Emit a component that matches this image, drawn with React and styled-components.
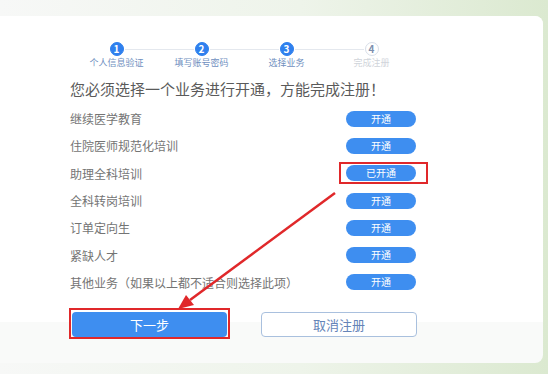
import styled, { createGlobalStyle } from "styled-components";

const GlobalStyle = createGlobalStyle`
  html, body {
    margin: 0;
    padding: 0;
  }
  body {
    font-family: "Noto Sans CJK SC", "Noto Sans", sans-serif;
  }
`;

const Page = styled.div`
  position: relative;
  width: 548px;
  height: 374px;
  box-sizing: border-box;
  padding: 16px 5px 11px 0;
  overflow: hidden;
  background: linear-gradient(90deg, #f7f8f7 0%, #eef4ea 55%, #dbe9d0 100%);
`;

const Panel = styled.div`
  height: 100%;
  display: flex;
  flex-direction: column;
  background: #f9faf9;
  border-radius: 0 8px 8px 0;
`;

const Card = styled.div`
  height: 306px;
  box-sizing: border-box;
  padding: 26px 0 0 70px;
  background: #fff;
  border-radius: 0 8px 0 0;
`;

const Steps = styled.div`
  display: flex;
  margin-left: 4px;
`;

const Step = styled.div`
  position: relative;
  width: 85px;
  display: flex;
  flex-direction: column;
  align-items: center;
  gap: 2px;

  &:not(:first-child)::before {
    content: "";
    position: absolute;
    top: 7px;
    left: calc(-50% + 8px);
    right: calc(50% + 8px);
    height: 1px;
    background: #e4e8ee;
  }
`;

const StepDot = styled.div`
  width: 14px;
  height: 14px;
  box-sizing: border-box;
  border-radius: 50%;
  display: flex;
  align-items: center;
  justify-content: center;
  font-size: 10px;
  line-height: 1;
  font-weight: 700;
  background: ${(p) => (p.$done ? "#2f80ee" : "#fff")};
  border: 1px solid ${(p) => (p.$done ? "#2f80ee" : "#d8dee8")};
  color: ${(p) => (p.$done ? "#fff" : "#7d8fae")};
`;

const StepLabel = styled.div`
  font-size: 9px;
  line-height: 10px;
  white-space: nowrap;
  color: ${(p) => (p.$done ? "#6f8fc0" : "#d0d4da")};
`;

const Heading = styled.div`
  margin-top: 11px;
  font-size: 15px;
  line-height: 20px;
  color: #5a5a5a;
`;

const List = styled.div`
  margin-top: 6px;
  width: 346px;
`;

const Row = styled.div`
  height: 27.3px;
  display: flex;
  align-items: center;
  justify-content: space-between;
`;

const RowLabel = styled.span`
  font-size: 12px;
  color: #747474;
  white-space: nowrap;
`;

const OpenButton = styled.button`
  position: relative;
  width: 70px;
  height: 16px;
  padding: 0;
  border: none;
  border-radius: 8px;
  background: #3e8ef0;
  color: #fff;
  font-family: inherit;
  font-size: 10px;
  line-height: 16px;

  ${(p) =>
    p.$marked &&
    `
    &::after {
      content: "";
      position: absolute;
      inset: -3px -12px -3px -7px;
      border: 2px solid #e0282a;
    }
  `}
`;

const Actions = styled.div`
  position: relative;
  display: flex;
  gap: 34px;
  margin-top: -10px;
  padding-left: 72px;
`;

const PrimaryButton = styled.button`
  position: relative;
  width: 155px;
  height: 25px;
  border: none;
  border-radius: 4px;
  background: #3e8ef0;
  color: #fff;
  font-family: inherit;
  font-size: 13px;

  &::after {
    content: "";
    position: absolute;
    inset: -4px -3px -2px -3px;
    border: 2px solid #e0282a;
  }
`;

const CancelButton = styled.button`
  width: 156px;
  height: 25px;
  box-sizing: border-box;
  border: 1px solid #a9c0de;
  border-radius: 4px;
  background: #fff;
  color: #6584b8;
  font-family: inherit;
  font-size: 13px;
`;

const Annotation = styled.svg`
  position: absolute;
  left: 0;
  top: 0;
  pointer-events: none;
`;

const steps = [
  { n: 1, label: "个人信息验证", done: true },
  { n: 2, label: "填写账号密码", done: true },
  { n: 3, label: "选择业务", done: true },
  { n: 4, label: "完成注册", done: false },
];

const services = [
  { name: "继续医学教育" },
  { name: "住院医师规范化培训" },
  { name: "助理全科培训", opened: true },
  { name: "全科转岗培训" },
  { name: "订单定向生" },
  { name: "紧缺人才" },
  { name: "其他业务（如果以上都不适合则选择此项）" },
];

export default function App() {
  return (
    <Page>
      <GlobalStyle />
      <Panel>
        <Card>
          <Steps>
            {steps.map((s) => (
              <Step key={s.n}>
                <StepDot $done={s.done}>{s.n}</StepDot>
                <StepLabel $done={s.done}>{s.label}</StepLabel>
              </Step>
            ))}
          </Steps>
          <Heading>您必须选择一个业务进行开通，方能完成注册！</Heading>
          <List>
            {services.map((s) => (
              <Row key={s.name}>
                <RowLabel>{s.name}</RowLabel>
                <OpenButton $marked={s.opened}>
                  {s.opened ? "已开通" : "开通"}
                </OpenButton>
              </Row>
            ))}
          </List>
        </Card>
        <Actions>
          <PrimaryButton>下一步</PrimaryButton>
          <CancelButton>取消注册</CancelButton>
        </Actions>
      </Panel>
      <Annotation width="548" height="374" viewBox="0 0 548 374">
        <line
          x1="335"
          y1="193"
          x2="190"
          y2="300"
          stroke="#e0282a"
          strokeWidth="2.5"
        />
        <polygon points="178,309 194,305 186,295" fill="#e0282a" />
      </Annotation>
    </Page>
  );
}
